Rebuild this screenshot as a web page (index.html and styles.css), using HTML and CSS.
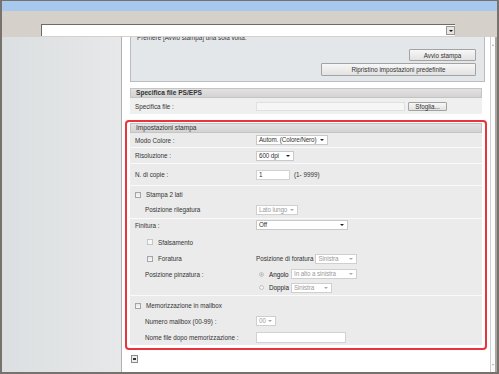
FILE: index.html
```html
<!DOCTYPE html>
<html lang="it">
<head>
<meta charset="utf-8">
<title>Stampa diretta</title>
<link rel="stylesheet" href="styles.css">
</head>
<body>
<div class="window">
  <div class="titlebar"></div>
  <div class="menubar"></div>
  <div class="addressbar">
    <div class="addr-input"><span class="addr-drop"></span></div>
  </div>
  <div class="main">
    <aside class="sidebar"></aside>
    <div class="content">
      <div class="page">
        <div class="top-box">
          <p class="note">Premere [Avvio stampa] una sola volta.</p>
          <div class="btns">
            <span class="btn btn-start">Avvio stampa</span>
            <span class="btn btn-reset">Ripristino impostazioni predefinite</span>
          </div>
        </div>

        <section class="sect">
          <div class="sect-head bold">Specifica file PS/EPS</div>
          <div class="row row-file">
            <span class="lbl">Specifica file :</span>
            <span class="ctl"><span class="input input-file"></span><span class="btn btn-browse">Sfoglia...</span></span>
          </div>
        </section>

        <section class="sect highlight">
          <div class="sect-head">Impostazioni stampa</div>
          <div class="row r1">
            <span class="lbl">Modo Colore :</span>
            <span class="ctl"><span class="select w-mode">Autom. (Colore/Nero)</span></span>
          </div>
          <div class="row r2">
            <span class="lbl">Risoluzione :</span>
            <span class="ctl"><span class="select w-res">600 dpi</span></span>
          </div>
          <div class="row r3">
            <span class="lbl">N. di copie :</span>
            <span class="ctl"><span class="input w-copies">1</span><span class="hint">(1- 9999)</span></span>
          </div>
          <div class="group g-duplex">
            <div class="line l-a1"><span class="check"></span><span>Stampa 2 lati</span></div>
            <div class="line l-a2 sub">
              <span class="lbl">Posizione rilegatura</span>
              <span class="ctl"><span class="select dis w-bind">Lato lungo</span></span>
            </div>
          </div>
          <div class="group g-finish">
            <div class="line l-b1">
              <span class="lbl">Finitura :</span>
              <span class="ctl"><span class="select w-off">Off</span></span>
            </div>
            <div class="line l-b2 sub2"><span class="check light"></span><span>Sfalsamento</span></div>
            <div class="line l-b3 sub2">
              <span class="lbl"><span class="check"></span><span>Foratura</span></span>
              <span class="ctl"><span class="pos-lbl">Posizione di foratura</span><span class="select dis w-punch">Sinistra</span></span>
            </div>
            <div class="line l-b4 sub">
              <span class="lbl">Posizione pinzatura :</span>
              <span class="ctl"><span class="radio on"></span><span class="rlbl">Angolo</span><span class="select dis w-corner">In alto a sinistra</span></span>
            </div>
            <div class="line l-b5 sub">
              <span class="lbl"></span>
              <span class="ctl"><span class="radio"></span><span class="rlbl">Doppia</span><span class="select dis w-double">Sinistra</span></span>
            </div>
          </div>
          <div class="group g-mail">
            <div class="line l-c1"><span class="check"></span><span>Memorizzazione in mailbox</span></div>
            <div class="line l-c2 sub">
              <span class="lbl">Numero mailbox (00-99) :</span>
              <span class="ctl"><span class="select dis w-box">00</span></span>
            </div>
            <div class="line l-c3 sub">
              <span class="lbl">Nome file dopo memorizzazione :</span>
              <span class="ctl"><span class="input w-name"></span></span>
            </div>
          </div>
        </section>

        <div class="page-foot"><span class="foot-icon"></span></div>
      </div>
    </div>
    <div class="scrollbar">
      <span class="sb-up"></span>
      <span class="sb-down"></span>
    </div>
  </div>
</div>
</body>
</html>
```
FILE: styles.css
```css
* { box-sizing: border-box; margin: 0; padding: 0; }
html, body { width: 499px; height: 374px; overflow: hidden; }
body {
  font-family: "Liberation Sans", Arial, sans-serif;
  font-size: 6.3px;
  color: #333;
  background: #fff;
}
.bold { font-weight: bold; }

.window {
  width: 499px;
  height: 374px;
  display: flex;
  flex-direction: column;
  border-style: solid;
  border-color: #77736c;
  border-width: 1px 2px 2px 2px;
}
.titlebar { height: 10px; background: #a7c9ee; }
.menubar { height: 13px; background: #d5d1ca; }
.addressbar {
  height: 13px;
  background: #d5d1ca;
  padding-left: 39px;
  padding-right: 42px;
}
.addr-input {
  height: 12px;
  background: #fff;
  border-top: 1px solid #6e6b66;
  border-left: 1px solid #6e6b66;
  position: relative;
}
.addr-drop {
  position: absolute;
  right: 0;
  top: 1px;
  width: 9px;
  height: 9px;
  background: #e8e6e2;
  border: 1px solid #9a968f;
}
.addr-drop::after {
  content: "";
  position: absolute;
  left: 2px;
  top: 3px;
  border-left: 2px solid transparent;
  border-right: 2px solid transparent;
  border-top: 2px solid #111;
}

.main { flex: 1; display: flex; min-height: 0; }
.sidebar {
  width: 120px;
  background: linear-gradient(to right, #dcdfe1, #e6e8e9);
  border-right: 1px solid #aeb0b2;
}
.content { flex: 1; overflow: hidden; background: #fff; }
.scrollbar {
  width: 7px;
  position: relative;
  background: #fbfbfb;
  border-left: 1px solid #d0d0d0;
  border-right: 2px solid #a8a6a2;
}
.sb-up, .sb-down {
  position: absolute;
  left: 1px;
  border-left: 1.5px solid transparent;
  border-right: 1.5px solid transparent;
}
.sb-up { top: 7px; border-bottom: 2px solid #b0b0b0; }
.sb-down { bottom: 6px; border-top: 2px solid #b0b0b0; }

.page { padding: 0 5px 0 8px; }

.top-box {
  margin-top: -7px;
  background: #e4e7ea;
  border: 1px solid #b9bdc1;
  padding: 2px 8px 5px 6px;
}
.note { line-height: 9px; }
.btns {
  display: flex;
  flex-direction: column;
  align-items: flex-end;
  gap: 2px;
  margin-top: 7px;
}
.btn {
  display: inline-flex;
  align-items: center;
  justify-content: center;
  background: linear-gradient(#f7f7f7, #e2e2e2);
  border: 1px solid #a3a3a3;
  border-radius: 1px;
  color: #333;
}
.btn-start { width: 67px; height: 12px; }
.btn-reset { width: 155px; height: 13px; }

.sect { margin-right: 3px; background: #ebebeb; }
.sect + .sect { margin-top: 9px; }
.sect:first-of-type { margin-top: 6px; }
.sect-head {
  height: 10px;
  line-height: 8px;
  padding-left: 5px;
  font-size: 6.6px;
  background: linear-gradient(#e2e2e2, #d3d3d3);
  border: 1px solid #c4c4c4;
}
.row {
  display: grid;
  grid-template-columns: 126px 1fr;
  align-items: center;
  border-bottom: 1px solid #fafafa;
}
.lbl { padding-left: 5px; display: flex; align-items: center; }
.ctl { display: flex; align-items: center; }
.row-file { height: 16px; background: #efefef; border-bottom: 0; }

.highlight { position: relative; }
.highlight::after {
  content: "";
  position: absolute;
  top: -3px;
  left: -5px;
  right: -5px;
  bottom: -5px;
  border: 2px solid #e9343c;
  border-radius: 4px;
  pointer-events: none;
}

.input {
  display: inline-block;
  height: 9px;
  line-height: 8px;
  background: #fff;
  border: 1px solid #d2d2d2;
  padding-left: 2px;
}
.input-file { width: 149px; border-color: #e0e0e0; background: #f6f6f6; }
.btn-browse { width: 39px; height: 9px; margin-left: 3px; }

.select {
  display: inline-block;
  position: relative;
  height: 10px;
  line-height: 8px;
  letter-spacing: -0.12px;
  background: #fff;
  border: 1px solid #c9c9c9;
  padding-left: 2px;
  white-space: nowrap;
}
.select::after {
  content: "";
  position: absolute;
  right: 3px;
  top: 3px;
  border-left: 2px solid transparent;
  border-right: 2px solid transparent;
  border-top: 2px solid #222;
}
.select.dis { color: #9b9b9b; border-color: #cfcfcf; }
.select.dis::after { border-top-color: #aaa; }

.w-mode { width: 72px; }
.w-res { width: 38px; }
.w-copies { width: 34px; height: 10px; }
.hint { margin-left: 4px; }
.w-bind { width: 42px; }
.w-off { width: 92px; }
.w-punch { width: 42px; margin-left: 2px; }
.w-corner { width: 66px; }
.w-double { width: 41px; }
.w-box { width: 20px; }
.w-name { width: 90px; height: 11px; }

.r1 { height: 15px; }
.r2 { height: 16px; }
.r3 { height: 22px; }

.group { border-bottom: 1px solid #fafafa; }
.line {
  display: grid;
  grid-template-columns: 126px 1fr;
  align-items: center;
}
.l-a1, .l-c1 { display: flex; align-items: center; padding-left: 5px; }
.check {
  display: inline-block;
  width: 6px;
  height: 6px;
  border: 1px solid #a5a5a5;
  background: linear-gradient(#e6e6e6, #fafafa);
  margin-right: 5px;
}
.check.light { border-color: #c6c6c6; background: #f7f7f7; }
.sub .lbl { padding-left: 15px; }
.sub2 { padding-left: 17px; }
.l-b2 { display: flex; align-items: center; }
.l-b3 { grid-template-columns: 109px 1fr; }
.l-b3 .lbl { padding-left: 0; }

.radio {
  display: inline-block;
  width: 5px;
  height: 5px;
  border-radius: 50%;
  border: 1px solid #c0c0c0;
  background: #f4f4f4;
  margin-left: 3px;
  margin-right: 5px;
}
.radio.on { background: radial-gradient(circle, #a8a8a8 0 40%, #eee 50%); }
.rlbl { width: 22px; color: #222; }

.g-duplex { height: 33px; padding-top: 1px; }
.l-a1 { height: 15px; }
.l-a2 { height: 15px; }
.g-finish { height: 77px; }
.l-b1 { height: 12px; }
.l-b2 { height: 18px; padding-top: 4px; }
.l-b3 { height: 17px; padding-top: 2px; }
.l-b4 { height: 15px; padding-top: 1px; }
.l-b5 { height: 13px; }
.g-mail { height: 49px; padding-top: 2px; border-bottom: 0; }
.l-c1 { height: 15px; }
.l-c2 { height: 16px; }
.l-c3 { height: 16px; }

.page-foot { margin-top: 10px; padding-left: 1px; }
.foot-icon {
  display: block;
  width: 7px;
  height: 8px;
  border: 1px solid #8a8a8a;
  background: #eee;
  position: relative;
}
.foot-icon::after {
  content: "";
  position: absolute;
  left: 1px;
  top: 2px;
  width: 3px;
  height: 2px;
  background: #333;
}
```
